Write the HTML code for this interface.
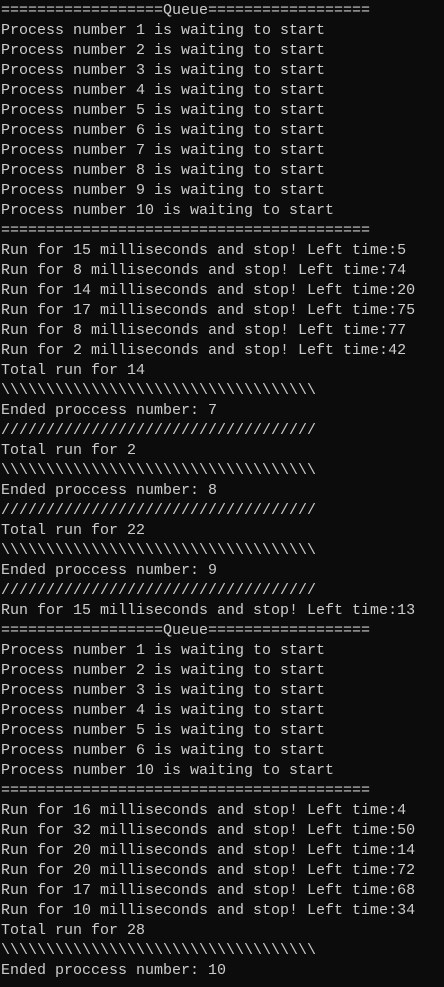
<!DOCTYPE html>
<html><head><meta charset="utf-8"><style>
html,body{margin:0;padding:0;background:#0c0c0c;width:444px;height:987px;overflow:hidden}
pre{margin:1px 0 0 1px;font-family:"Liberation Mono",monospace;font-size:15px;line-height:20px;color:#cccccc;white-space:pre}
</style></head><body><pre>==================Queue==================
Process number 1 is waiting to start
Process number 2 is waiting to start
Process number 3 is waiting to start
Process number 4 is waiting to start
Process number 5 is waiting to start
Process number 6 is waiting to start
Process number 7 is waiting to start
Process number 8 is waiting to start
Process number 9 is waiting to start
Process number 10 is waiting to start
=========================================
Run for 15 milliseconds and stop! Left time:5
Run for 8 milliseconds and stop! Left time:74
Run for 14 milliseconds and stop! Left time:20
Run for 17 milliseconds and stop! Left time:75
Run for 8 milliseconds and stop! Left time:77
Run for 2 milliseconds and stop! Left time:42
Total run for 14
\\\\\\\\\\\\\\\\\\\\\\\\\\\\\\\\\\\
Ended proccess number: 7
///////////////////////////////////
Total run for 2
\\\\\\\\\\\\\\\\\\\\\\\\\\\\\\\\\\\
Ended proccess number: 8
///////////////////////////////////
Total run for 22
\\\\\\\\\\\\\\\\\\\\\\\\\\\\\\\\\\\
Ended proccess number: 9
///////////////////////////////////
Run for 15 milliseconds and stop! Left time:13
==================Queue==================
Process number 1 is waiting to start
Process number 2 is waiting to start
Process number 3 is waiting to start
Process number 4 is waiting to start
Process number 5 is waiting to start
Process number 6 is waiting to start
Process number 10 is waiting to start
=========================================
Run for 16 milliseconds and stop! Left time:4
Run for 32 milliseconds and stop! Left time:50
Run for 20 milliseconds and stop! Left time:14
Run for 20 milliseconds and stop! Left time:72
Run for 17 milliseconds and stop! Left time:68
Run for 10 milliseconds and stop! Left time:34
Total run for 28
\\\\\\\\\\\\\\\\\\\\\\\\\\\\\\\\\\\
Ended proccess number: 10</pre></body></html>
